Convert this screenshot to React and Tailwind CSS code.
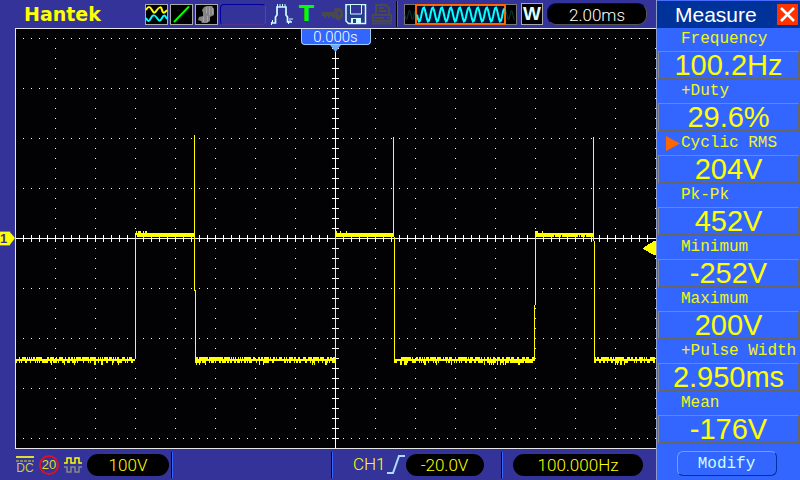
const MEASUREMENTS = [
  { label: "Frequency", value: "100.2Hz" },
  { label: "+Duty", value: "29.6%" },
  { label: "Cyclic RMS", value: "204V", active: true },
  { label: "Pk-Pk", value: "452V" },
  { label: "Minimum", value: "-252V" },
  { label: "Maximum", value: "200V" },
  { label: "+Pulse Width", value: "2.950ms" },
  { label: "Mean", value: "-176V" },
];

const PLOT_W = 641;
const PLOT_H = 421;
const MID_X = 320;
const MID_Y = 210;

// small fixed-seed generator so the noise is the same on every render
function noise(seed) {
  let s = seed;
  return () => {
    s = (s * 1103515245 + 12345) % 2147483648;
    return s / 2147483648;
  };
}

const block = (x, y, w, h) => `M${x} ${y}h${w}v${h}h${-w}z`;

function buildGrid() {
  let d = "";
  for (let y = 10; y < 420; y += 50) {
    for (let x = 8; x < 640; x += 8) d += block(x, y, 1, 1);
  }
  for (let x = 40; x <= 640; x += 40) {
    for (let y = 20; y < 420; y += 10) d += block(x, y, 1, 1);
  }
  return d;
}

function buildAxes() {
  let d = block(0, MID_Y, PLOT_W, 1) + block(MID_X, 0, 1, PLOT_H);
  for (let x = 8; x < 640; x += 8) d += block(x, MID_Y - 3, 1, 7);
  for (let y = 10; y < 420; y += 10) d += block(MID_X - 3, y, 7, 1);
  return d;
}

function buildTrace() {
  const rand = noise(77);
  let d = "";
  const low = (from, to) => {
    for (let x = from; x < to; x++) {
      const top = rand() < 0.65 ? 329 : 331;
      const r = rand();
      const bottom = r < 0.45 ? 333 : r < 0.9 ? 335 : 337;
      d += block(x, top, 1, bottom - top);
    }
  };
  const high = (from, to) => {
    for (let x = from; x < to; x++) {
      const top = x - from < 12 && rand() < 0.45 ? 203 : 205;
      const bottom = rand() < 0.05 ? 207 : 209;
      d += block(x, top, 1, bottom - top);
    }
  };
  low(0, 120);
  d += block(120, 205, 1, 126);
  high(120, 180);
  d += block(179, 107, 1, 156) + block(180, 262, 1, 70);
  low(180, 320);
  d += block(320, 205, 1, 126);
  high(320, 378);
  d += block(378, 109, 1, 100) + block(379, 209, 1, 122);
  low(379, 520);
  d += block(520, 205, 1, 72) + block(519, 277, 1, 54);
  high(520, 578);
  d += block(578, 109, 1, 104) + block(579, 213, 1, 118);
  low(579, 640);
  return d;
}

const GRID = buildGrid();
const AXES = buildAxes();
const TRACE = buildTrace();

function buildWave(from, to, period, mid, amp) {
  const pts = [];
  for (let x = from; x <= to; x++) {
    const y = mid + amp * Math.sin(((x - from) / period) * 2 * Math.PI);
    pts.push(`${x},${y.toFixed(1)}`);
  }
  return pts.join(" ");
}

function Plot() {
  return (
    <svg viewBox={`0 0 ${PLOT_W} ${PLOT_H}`} className="block w-full bg-[#020204]" shapeRendering="crispEdges" role="img" aria-label="Channel 1 trace">
      <path d={GRID} fill="#fff" />
      <path d={AXES} fill="#fff" />
      <path d={TRACE} fill="#ff0" />
      <path d="M0 0h641v1H1v419h640v1H0z" fill="#e6e6e6" />
      <path d="M641 213h-2l-11 7v1l11 6h2z" fill="#ff0" />
    </svg>
  );
}

function WavesIcon() {
  return (
    <svg width="23" height="21" viewBox="0 0 23 21" fill="none" strokeWidth="2">
      <rect x="0.5" y="0.5" width="22" height="20" fill="#000" stroke="#aaa" strokeWidth="1" />
      <path d="M1 6c2-4 4-4 6 0s3 3 5 0 4-4 5 0 3 3 5 0" stroke="#ff0" />
      <path d="M1 14c2 4 3 4 5 0s4-3 6 0 3 4 5 0 3-3 5 1" stroke="#0ff" />
    </svg>
  );
}

function VectorIcon() {
  return (
    <svg width="23" height="21" viewBox="0 0 23 21">
      <rect x="0.5" y="0.5" width="22" height="20" fill="#000" stroke="#aaa" />
      <path d="M4.5 17.5L18.5 3" stroke="#0f0" strokeWidth="2" strokeLinecap="round" />
    </svg>
  );
}

function PersistIcon() {
  return (
    <svg width="23" height="21" viewBox="0 0 23 21">
      <rect x="0.5" y="0.5" width="22" height="20" fill="#000" stroke="#aaa" />
      <path d="M9 3l3-1h5l2 3v6l-4 2v4l-3 2H7l-1-2-3-1 1-3 4-1V9L7 6z" fill="#858585" />
      <path d="M11.5 3v6M14.5 3v8M8.5 13v5M12.5 12v6M17.5 4v6" stroke="#a4a4a4" />
    </svg>
  );
}

function PulseIcon() {
  return (
    <svg width="25" height="22" viewBox="0 0 25 22" fill="none" stroke="#cff">
      <path d="M3 20h4.5V14L9 12V4h9v8l1.5 2v5H24" strokeWidth="1.7" />
      <path d="M4.5 17v3M9.5 1v3M12 1v3M14.5 1v3M17 1v3M22 15v4M24 15v2M3.5 19v3M20.5 18v3" />
    </svg>
  );
}

function KeyIcon() {
  return (
    <svg width="22" height="16" viewBox="0 0 22 16" fill="#4a4a4a">
      <path d="M0 8l2-2h13v4h-2v2h-2v-2H9v2H7v-2H5v2H3v-2H1z" />
      <path fillRule="evenodd" d="M14 2h5l3 3v6l-3 3h-3l-3-3V4zm3 4v3h2V6z" />
    </svg>
  );
}

function SaveIcon() {
  return (
    <svg width="22" height="21" viewBox="0 0 22 21" fill="none" stroke="#cff">
      <path d="M1 .5h19.5v19H3.5L1 17z" strokeWidth="1.5" fill="#2c3a8c" />
      <path d="M5.5 1v9h11V1" fill="#333399" />
      <path d="M6 14h10v6H6z" fill="#cff" stroke="none" />
      <path d="M8 15h3v4H8z" fill="#333399" stroke="none" />
    </svg>
  );
}

function PrinterIcon() {
  return (
    <svg width="25" height="21" viewBox="0 0 25 21" fill="none" stroke="#4a4a4a" strokeWidth="2">
      <path d="M7 10V1h10l3 3v6M9.5 4h6M9.5 7h8M4 11h18v6H4zM3 19.5h20M6 14h9M18 14h2" />
    </svg>
  );
}

function MemoryBar() {
  return (
    <svg width="113" height="21" viewBox="0 0 113 21" fill="none">
      <rect x="0.5" y="0.5" width="112" height="20" fill="#000" stroke="#777" />
      <polyline points={buildWave(1, 111, 6, 11, 5)} stroke="#063a3a" />
      <rect x="12" y="1" width="89" height="19" fill="#013" stroke="#f60" strokeWidth="2" />
      <polyline points={buildWave(13, 100, 9, 10.5, 7)} stroke="#0ff" strokeWidth="2" />
    </svg>
  );
}

function Divider() {
  return <span className="h-[26px] w-0.5 shrink-0 border-r border-[#3366ff] bg-black" />;
}

function TopBar() {
  return (
    <header className="flex h-7 items-center gap-0.5">
      <h1 className="w-[143px] pl-6 font-['DejaVu_Sans',sans-serif] text-[19px] leading-5 font-bold text-[#ff0]">Hantek</h1>
      <WavesIcon />
      <VectorIcon />
      <PersistIcon />
      <span className="h-[21px] w-[46px] rounded border border-[#0000a0] border-r-[#555] border-b-[#553388]" />
      <PulseIcon />
      <span className="w-6 pl-1 font-['DejaVu_Sans',sans-serif] text-[22px] leading-5 font-bold text-[#0f0]">T</span>
      <KeyIcon />
      <SaveIcon />
      <PrinterIcon />
      <Divider />
      <span className="ml-1">
        <MemoryBar />
      </span>
      <span className="ml-0.5 flex h-[22px] w-[22px] items-center justify-center border border-[#aaa] bg-black text-[19px] leading-5 font-bold text-[#dff]">
        W
      </span>
      <span className="ml-0.5 h-[22px] w-[100px] rounded-[9px] border border-[#000090] border-r-[#555] border-b-[#555] bg-black text-center font-['Roboto',sans-serif] text-[17px] leading-[22px] font-light text-white">
        2.00ms
      </span>
    </header>
  );
}

function Screen() {
  return (
    <main className="relative pl-[15px]">
      <Plot />
      <div className="absolute inset-x-0 top-px flex flex-col items-center pl-[15px]">
        <span className="h-4 w-[70px] rounded-b border border-t-0 border-[#9cf] bg-[#3366ff] text-center font-['Roboto',sans-serif] text-[15px] leading-[17px] font-light text-white">
          0.000s
        </span>
        <svg width="11" height="7" viewBox="0 0 11 7">
          <path d="M0 0h11L5.5 7z" fill="#6af" />
        </svg>
      </div>
      <div className="absolute inset-y-0 left-0 flex items-center">
        <svg width="15" height="15" viewBox="0 0 15 15">
          <path d="M0 0h9l6 7-6 8H0z" fill="#ff0" />
          <path d="M0 .5h9M0 14.5h9" stroke="#884" />
        </svg>
        <span className="absolute left-0 text-[13px] leading-[15px] font-bold text-[#333399]">1</span>
      </div>
    </main>
  );
}

function Pill({ className, children }) {
  return <span className={`h-[22px] rounded-full bg-black text-center leading-[23px] ${className}`}>{children}</span>;
}

function BottomBar() {
  return (
    <footer className="flex h-[31px] items-center pl-4 font-['Roboto',sans-serif] text-[17px] font-light text-[#ff0]">
      <span className="flex w-[18px] flex-col items-center">
        <svg width="18" height="6" viewBox="0 0 18 6" stroke="#dd3">
          <path d="M0 1h18" strokeWidth="2" />
          <path d="M0 5h18" strokeDasharray="3 1" />
        </svg>
        <span className="font-['Liberation_Sans',sans-serif] text-xs leading-3 font-normal text-[#cc3]">DC</span>
      </span>
      <span className="ml-[5px] h-5 w-5 rounded-full border-2 border-[#e01020] text-center font-['Liberation_Sans',sans-serif] text-[13px] leading-4 font-normal text-[#dd3]">
        20
      </span>
      <svg className="ml-[5px]" width="18" height="16" viewBox="0 0 18 16" fill="none" strokeWidth="1.5">
        <path d="M0 6h3V1h4v5h4V1h4v5h3" stroke="#ff0" />
        <path d="M0 10h3v5h4v-5h4v5h4v-5h3" stroke="#888" />
      </svg>
      <Pill className="ml-[5px] w-[82px]">100V</Pill>
      <span className="ml-0.5 flex w-[162px] justify-between">
        <Divider />
        <Divider />
      </span>
      <span className="ml-5">CH1</span>
      <svg width="20" height="19" viewBox="0 0 20 19" fill="none" stroke="#adf" strokeWidth="2">
        <path d="M1 18h6l6-17h6" />
      </svg>
      <Pill className="w-[78px]">-20.0V</Pill>
      <span className="ml-auto flex items-center gap-2.5 pr-[13px]">
        <Divider />
        <Pill className="w-[130px]">100.000Hz</Pill>
      </span>
    </footer>
  );
}

function MeasurePanel() {
  return (
    <aside className="w-[144px] shrink-0 border-l border-[#8c9ccc] bg-[#3366ff]">
      <div className="flex h-7 items-center border-t border-[#4a6cff] bg-[#003399] pr-0.5 pl-[18px]">
        <h2 className="flex-1 text-[21px] leading-6 text-white">Measure</h2>
        <button type="button" aria-label="Close" className="flex h-[21px] w-[21px] items-center justify-center bg-[#ff3300]">
          <svg width="15" height="15" viewBox="0 0 15 15" stroke="#fff" strokeWidth="2.5">
            <path d="M1 1l13 13M14 1L1 14" />
          </svg>
        </button>
      </div>
      <dl className="px-px text-[#ff0]">
        {MEASUREMENTS.map((m) => (
          <div key={m.label}>
            <dt className="flex h-[23px] items-start font-['Liberation_Mono',monospace] text-base leading-[22px] whitespace-nowrap text-[#f0f520]">
              <span className="w-[23px] shrink-0 pt-1 pl-2">
                {m.active && (
                  <svg width="14" height="15" viewBox="0 0 14 15" fill="#f60">
                    <path d="M0 0l14 7.5L0 15z" />
                  </svg>
                )}
              </span>
              {m.label}
            </dt>
            <dd className="h-[29px] border border-b-2 border-[#666] border-t-[#888] border-l-[#888] text-center text-[29px] leading-[27px]">{m.value}</dd>
          </div>
        ))}
      </dl>
      <div className="flex justify-center pt-[7px] pr-1">
        <button type="button" className="h-[25px] w-[100px] rounded-md border border-[#6aa0ff] border-r-[#003399] border-b-[#003399] font-['Liberation_Mono',monospace] text-base leading-6 text-[#cff]">
          Modify
        </button>
      </div>
    </aside>
  );
}

export default function App() {
  return (
    <div className="flex min-h-screen bg-[#333399] font-['Liberation_Sans',Arial,sans-serif]">
      <div className="min-w-0 flex-1">
        <TopBar />
        <Screen />
        <BottomBar />
      </div>
      <MeasurePanel />
    </div>
  );
}
